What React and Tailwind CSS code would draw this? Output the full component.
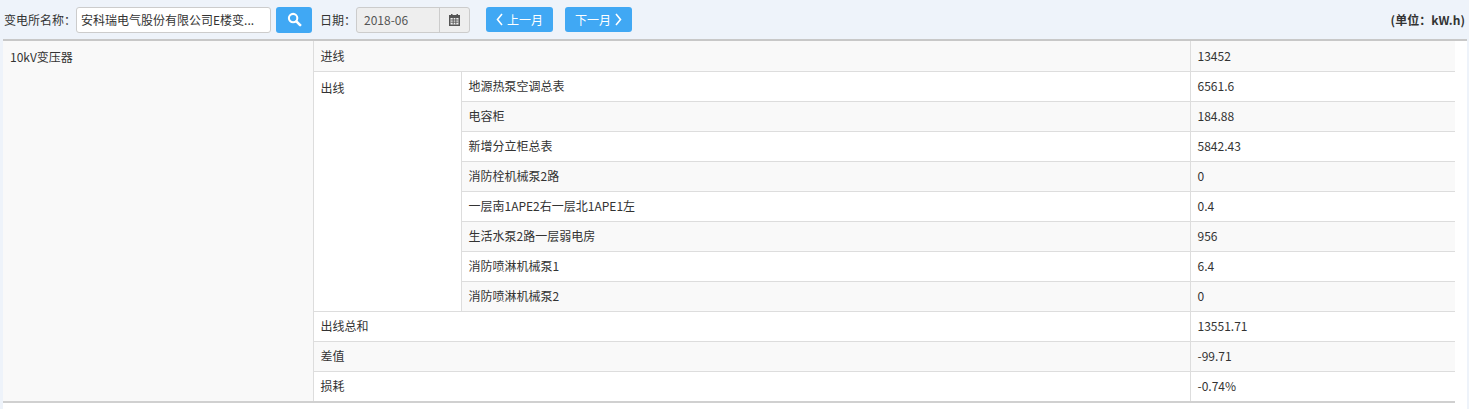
import React from "react";

const outs = [
  ["地源热泵空调总表", "6561.6"],
  ["电容柜", "184.88"],
  ["新增分立柜总表", "5842.43"],
  ["消防栓机械泵2路", "0"],
  ["一层南1APE2右一层北1APE1左", "0.4"],
  ["生活水泵2路一层弱电房", "956"],
  ["消防喷淋机械泵1", "6.4"],
  ["消防喷淋机械泵2", "0"],
];

const td = "border border-[#dddddd] px-[7px] h-[30px] align-middle";

export default function App() {
  let idx = 0;
  const bg = () => (idx++ % 2 === 0 ? "bg-[#f9f9f9]" : "bg-white");
  return (
    <div className="w-[1469px] h-[409px] bg-[#eef3fa] text-[12px] text-[#333] overflow-hidden" style={{ fontFamily: '"Noto Sans CJK SC", "Noto Sans", sans-serif' }}>
      <div className="h-[39px] flex items-center pl-[4px] pr-[4px]">
        <span>变电所名称：</span>
        <div className="w-[195px] h-[26px] border border-[#ccc] rounded-[3px] bg-white flex items-center px-[4px] truncate">安科瑞电气股份有限公司E楼变...</div>
        <button className="ml-[5px] w-[36px] h-[26px] rounded-[3px] bg-[#40a8f4] flex items-center justify-center">
          <svg width="15" height="15" viewBox="0 0 16 16"><circle cx="6.5" cy="6.5" r="4.5" fill="none" stroke="white" strokeWidth="2.2"/><path d="M10 10l4 4" stroke="white" strokeWidth="2.8" strokeLinecap="round"/></svg>
        </button>
        <span className="ml-[8px]">日期：</span>
        <div className="flex h-[26px] border border-[#ccc] rounded-[3px] bg-[#eeeeee]">
          <div className="w-[82px] flex items-center pl-[7px] text-[#555]">2018-06</div>
          <div className="w-[30px] border-l border-[#ccc] flex items-center justify-center">
            <svg width="11" height="12" viewBox="0 0 11 12"><rect x="0" y="1" width="11" height="11" fill="#555"/><rect x="1.5" y="4" width="8" height="6.5" fill="#eee"/><path d="M1.5 6h8M1.5 8.2h8M4.2 4v6.5M6.8 4v6.5" stroke="#555" strokeWidth="0.9"/><rect x="2" y="0" width="1.5" height="2.5" fill="#555"/><rect x="7.5" y="0" width="1.5" height="2.5" fill="#555"/></svg>
          </div>
        </div>
        <button className="ml-[16px] w-[67px] h-[25px] rounded-[3px] bg-[#40a8f4] text-white flex items-center justify-center gap-[4px]">
          <svg width="7" height="13" viewBox="0 0 7 13"><path d="M6 1L1.5 6.5L6 12" stroke="white" strokeWidth="1.6" fill="none"/></svg>上一月
        </button>
        <button className="ml-[12px] w-[67px] h-[25px] rounded-[3px] bg-[#40a8f4] text-white flex items-center justify-center gap-[4px]">
          下一月<svg width="7" height="13" viewBox="0 0 7 13"><path d="M1 1L5.5 6.5L1 12" stroke="white" strokeWidth="1.6" fill="none"/></svg>
        </button>
        <span className="ml-auto font-bold">(单位：kW.h)</span>
      </div>
      <div className="ml-[3px] mr-[2px] border-t-2 border-[#c8c8c8] bg-white h-[370px]">
        <table className="w-[1452px] border-collapse table-fixed" style={{ borderStyle: "hidden" }}>
          <colgroup>
            <col style={{ width: 310 }} />
            <col style={{ width: 148 }} />
            <col style={{ width: 729 }} />
            <col style={{ width: 265 }} />
          </colgroup>
          <tbody>
            <tr className={bg()}>
              <td rowSpan={13} className="border border-[#dddddd] px-[7px] pt-[7px] align-top bg-[#f9f9f9]">10kV变压器</td>
              <td colSpan={2} className={td}>进线</td>
              <td className={td}>13452</td>
            </tr>
            {outs.map(([n, v], i) => (
              <tr key={n} className={bg()}>
                {i === 0 && <td rowSpan={8} className="border border-[#dddddd] px-[7px] pt-[7px] align-top bg-white">出线</td>}
                <td className={td}>{n}</td>
                <td className={td}>{v}</td>
              </tr>
            ))}
            {[["出线总和", "13551.71"], ["差值", "-99.71"], ["损耗", "-0.74%"]].map(([n, v]) => (
              <tr key={n} className={bg()}>
                <td colSpan={2} className={td}>{n}</td>
                <td className={td}>{v}</td>
              </tr>
            ))}
          </tbody>
        </table>
        <div className="border-t-2 border-[#d0d0d0] w-[1452px]"></div>
      </div>
    </div>
  );
}
